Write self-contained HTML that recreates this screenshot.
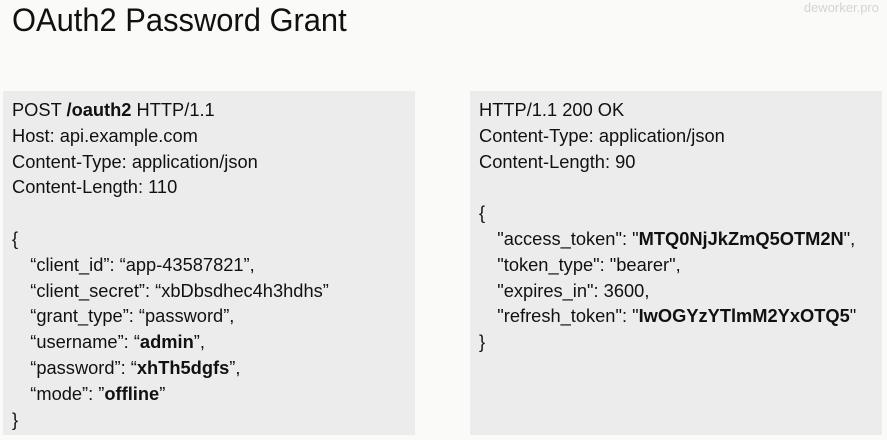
<!DOCTYPE html>
<html><head><meta charset="utf-8"><style>
html,body{margin:0;padding:0;}
body{width:887px;height:440px;background:#fafaf9;position:relative;overflow:hidden;font-family:"Liberation Sans",sans-serif;color:#111;}
.t{position:absolute;left:12px;top:0px;font-size:32px;line-height:40px;transform:scaleX(0.965);transform-origin:left;white-space:nowrap;}
.w{position:absolute;right:8px;top:0px;font-size:13px;color:#d4d4d4;line-height:16px;}
.box{position:absolute;top:91px;height:344px;width:412px;background:#ececec;}
.c{position:absolute;top:98px;font-size:18px;line-height:25.8px;white-space:pre;transform:scaleX(1.015);transform-origin:left;}
.i{display:inline-block;width:18px;}
b{font-weight:bold;}
</style></head><body>
<div class="t">OAuth2 Password Grant</div>
<div class="w">deworker.pro</div>
<div class="box" style="left:3px"></div>
<div class="box" style="left:470px"></div>
<div class="c" style="left:12px">POST <b>/oauth2</b> HTTP/1.1
Host: api.example.com
Content-Type: application/json
Content-Length: 110

{
<span class="i"></span>“client_id”: “app-43587821”,
<span class="i"></span>“client_secret”: “xbDbsdhec4h3hdhs”
<span class="i"></span>“grant_type”: “password”,
<span class="i"></span>“username”: “<b>admin</b>”,
<span class="i"></span>“password”: “<b>xhTh5dgfs</b>”,
<span class="i"></span>“mode”: ”<b>offline</b>”
}</div>
<div class="c" style="left:479px">HTTP/1.1 200 OK
Content-Type: application/json
Content-Length: 90

{
<span class="i"></span>"access_token": "<b>MTQ0NjJkZmQ5OTM2N</b>",
<span class="i"></span>"token_type": "bearer",
<span class="i"></span>"expires_in": 3600,
<span class="i"></span>"refresh_token": "<b>IwOGYzYTlmM2YxOTQ5</b>"
}</div>
</body></html>
